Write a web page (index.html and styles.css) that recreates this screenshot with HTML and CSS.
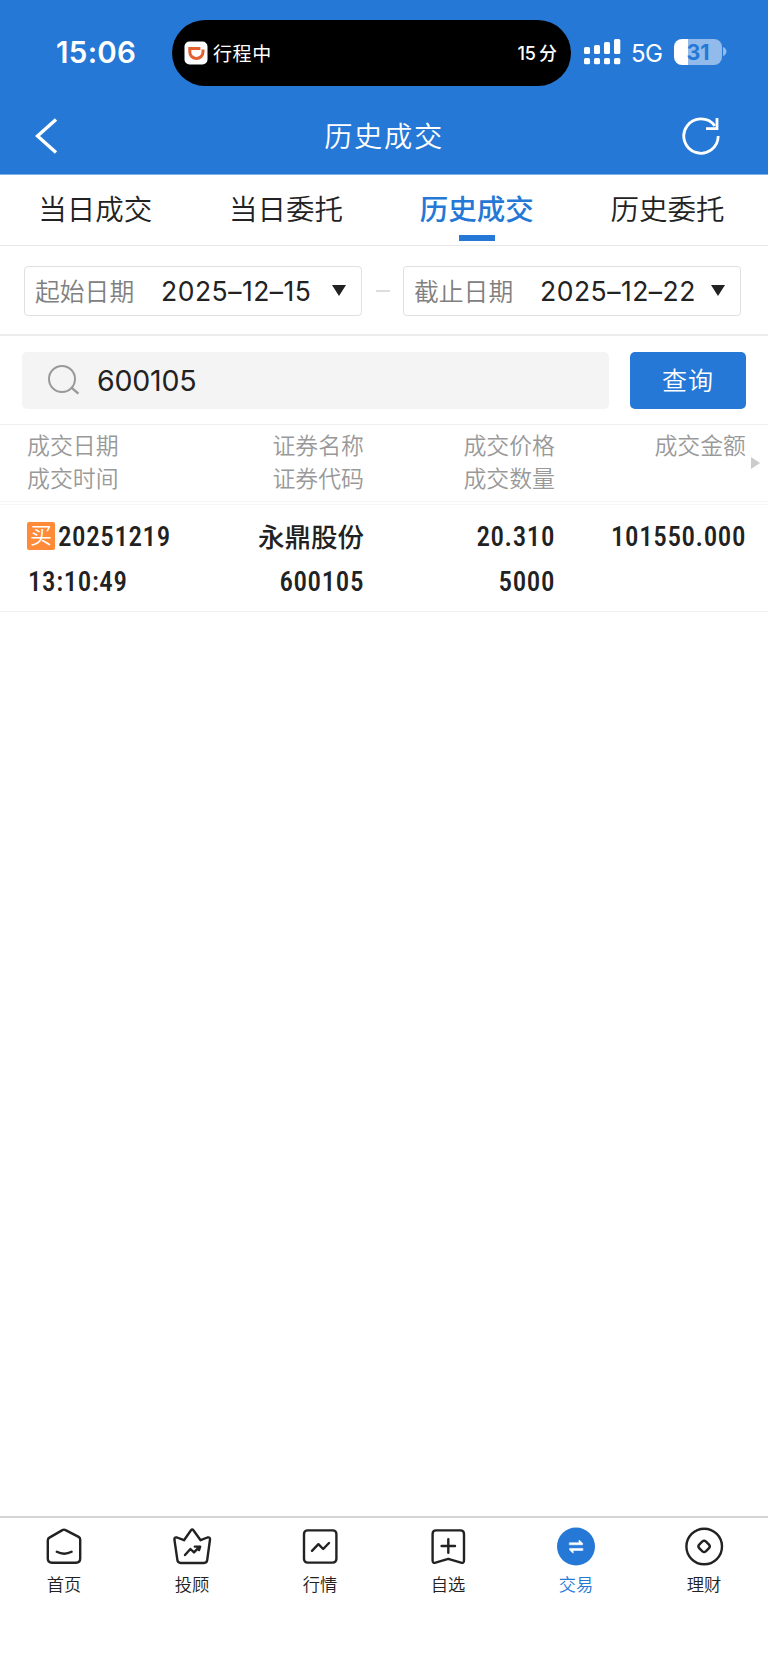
FILE: index.html
```html
<!DOCTYPE html>
<html lang="zh-CN">
<head>
  <meta charset="UTF-8">
  <meta name="viewport" content="width=device-width, initial-scale=1.0">
  <title>历史成交</title>
  <link rel="stylesheet" href="styles.css">
</head>
<body>
  <!-- Header -->
  <header class="header">
    <div class="status-bar">
      <span class="clock">15:06</span>
      <div class="island">
        <svg class="trip-icon" width="24" height="24" viewBox="0 0 24 24">
          <rect x="0.5" y="0.5" width="23" height="23" rx="5" fill="#fff"/>
          <path d="M16.4 7.4H5.8V11A6.5 6.5 0 0 0 19 11V8.4" fill="none" stroke="#e4602f" stroke-width="3"/>
        </svg>
        <span class="trip">行程中</span>
        <span class="eta">15<i>分</i></span>
      </div>
      <svg class="signal" width="37" height="26" viewBox="0 0 37 26" fill="#fff">
        <rect x="0" y="8" width="6" height="7" rx="1.6"/>
        <rect x="10" y="6" width="6" height="9" rx="1.6"/>
        <rect x="20" y="3" width="6" height="12" rx="1.6"/>
        <rect x="30" y="0" width="6.3" height="15" rx="1.6"/>
        <rect x="0" y="19" width="6" height="6.3" rx="1.6"/>
        <rect x="10" y="19" width="6" height="6.3" rx="1.6"/>
        <rect x="20" y="19" width="6" height="6.3" rx="1.6"/>
        <rect x="30" y="19" width="6.3" height="6.3" rx="1.6"/>
      </svg>
      <span class="network">5G</span>
      <div class="battery"><span>31</span></div>
      <svg class="battery-cap" width="4" height="9" viewBox="0 0 4 9">
        <path d="M0 0C4.6 1.6 4.6 7.4 0 9Z" fill="#92bbeb"/>
      </svg>
    </div>
    <div class="title-bar">
      <svg class="back" width="24" height="36" viewBox="0 0 24 36">
        <path d="M21 1.5L2.5 18L21 34.5" fill="none" stroke="#fff" stroke-width="3.4"/>
      </svg>
      <h1>历史成交</h1>
      <svg class="refresh" width="40" height="40" viewBox="0 0 40 40" fill="none" stroke="#fff" stroke-width="2.8">
        <path d="M37.2 20A17.2 17.2 0 1 1 33.8 9.8"/>
        <path d="M36 2V12.7H25"/>
      </svg>
    </div>
  </header>

  <!-- Tabs -->
  <nav class="tabs">
    <a>当日成交</a>
    <a>当日委托</a>
    <a class="active">历史成交</a>
    <a>历史委托</a>
  </nav>

  <!-- Date range -->
  <section class="dates">
    <div class="date-box">
      <label>起始日期</label>
      <span class="date">2025–12–15</span>
      <span class="caret"></span>
    </div>
    <span class="dash"></span>
    <div class="date-box">
      <label>截止日期</label>
      <span class="date">2025–12–22</span>
      <span class="caret"></span>
    </div>
  </section>

  <!-- Search -->
  <section class="search">
    <div class="search-box">
      <svg width="32" height="30" viewBox="0 0 32 30" fill="none" stroke="#999" stroke-width="2">
        <circle cx="14" cy="14" r="13"/>
        <path d="M23.2 22.4L30.4 28.6" stroke-width="2.4"/>
      </svg>
      <span>600105</span>
    </div>
    <button class="btn">查询</button>
  </section>

  <!-- Deals -->
  <section class="table-head">
    <div>成交日期<br>成交时间</div>
    <div>证券名称<br>证券代码</div>
    <div>成交价格<br>成交数量</div>
    <div>成交金额</div>
    <span class="more"></span>
  </section>
  <section class="table-row">
    <div><p><b class="buy">买</b>20251219</p><p>13:10:49</p></div>
    <div><p class="name">永鼎股份</p><p>600105</p></div>
    <div><p>20.310</p><p>5000</p></div>
    <div><p>101550.000</p></div>
  </section>

  <!-- Bottom nav -->
  <nav class="bottom-nav">
    <a>
      <svg width="40" height="40" viewBox="0 0 40 40">
        <path d="M5.4 11.6L18.4 4.1Q20 3.2 21.6 4.1L34.6 10.9Q36.2 11.8 36.2 13.6V32.6Q36.2 36.8 32 36.8H8Q3.8 36.8 3.8 32.6V14.2Q3.8 12.5 5.4 11.6Z"/>
        <path d="M12.8 25.8Q20.2 29.6 27.6 25.8"/>
      </svg>
      首页
    </a>
    <a>
      <svg width="40" height="40" viewBox="0 0 40 40">
        <path d="M19 4.2Q20.2 2.8 21.4 4.2L28.6 14.2L35.4 11.5Q38.2 10.8 38 13.5L35.2 34.2Q34.8 37 32 37H8.6Q5.8 37 5.4 34.2L2.4 13.5Q2.2 10.8 5 11.5L12 14.2Z"/>
        <path d="M13 29L18.4 23L22 26.4L27.6 20.6M22.8 20.6H28.2L27 24"/>
      </svg>
      投顾
    </a>
    <a>
      <svg width="40" height="40" viewBox="0 0 40 40">
        <rect x="4" y="4.4" width="32.4" height="32.2" rx="3.6"/>
        <path d="M12 24.8L18.4 18.2L23.2 23L29 17"/>
      </svg>
      行情
    </a>
    <a>
      <svg width="40" height="40" viewBox="0 0 40 40">
        <path d="M8 4.4H32.4Q36 4.4 36 8V34.6Q36 37.6 33 36.7L20.2 32.8L7.6 36.7Q4.6 37.6 4.6 34.6V8Q4.6 4.4 8 4.4Z"/>
        <path d="M13.6 20H27M20.3 13.3V26.7"/>
      </svg>
      自选
    </a>
    <a class="active">
      <svg width="40" height="40" viewBox="0 0 40 40">
        <circle class="disc" cx="20" cy="20.5" r="19"/>
        <path class="arrows" d="M13.6 16.8H23V14.1L26.6 17.2V18.8H13.6ZM26.6 22.4H13.6V24L17.2 27.2V24.4H26.6Z"/>
      </svg>
      交易
    </a>
    <a>
      <svg width="40" height="40" viewBox="0 0 40 40">
        <circle cx="20.2" cy="20.5" r="17.8"/>
        <path d="M18.4 15.4Q20.1 14 21.8 15.4L25 18.6Q26.6 20.4 25 22.2L21.8 25.4Q20.1 26.8 18.4 25.4L15.2 22.2Q13.6 20.4 15.2 18.6Z"/>
      </svg>
      理财
    </a>
  </nav>
</body>
</html>
```

FILE: styles.css
```css
* {
  margin: 0;
  padding: 0;
  box-sizing: border-box;
}

body {
  display: flex;
  flex-direction: column;
  height: 1665px;
  background-color: #fff;
  color: #222;
  font-family: Inter, "Noto Sans CJK SC", sans-serif;
  font-weight: 350;
}

svg {
  display: block;
  flex-shrink: 0;
}

/* Header */
.header {
  height: 175px;
  background-color: #2578d6;
  border-bottom: 1px solid #7fb0e7;
  color: #fff;
}
.status-bar {
  display: flex;
  align-items: center;
  padding: 20px 0 0 56px;
}
.clock {
  width: 116px;
  margin-top: -2px;
  font-size: 29.5px;
  font-weight: 600;
  letter-spacing: 0.3px;
}
.island {
  display: flex;
  align-items: center;
  width: 399px;
  height: 66px;
  padding: 0 14px 0 12px;
  border-radius: 33px;
  background-color: #000;
}
.trip {
  margin: -2px 0 0 5px;
  font-size: 19px;
  font-weight: 400;
  letter-spacing: 0.6px;
}
.eta {
  margin: -2px 0 0 auto;
  font-size: 18px;
  font-weight: 500;
}
.eta i {
  margin-left: 3px;
  font-style: normal;
}
.signal {
  margin: -3px 0 0 13px;
}
.network {
  width: 43px;
  margin-left: 10px;
  font-size: 24px;
  font-weight: 400;
  letter-spacing: -0.5px;
}
.battery {
  width: 48px;
  height: 26px;
  margin-top: -3px;
  border-radius: 8px;
  background: linear-gradient(to right, #fff 14px, #92bbeb 14px);
  color: #2578d6;
  font-size: 21.5px;
  font-weight: 700;
  line-height: 26px;
  text-align: center;
}
.battery-cap {
  margin: -3px 0 0 1px;
}
.title-bar {
  display: grid;
  grid-template-columns: 100px 1fr 100px;
  align-items: center;
  height: 88px;
  padding: 11px 0 0;
}
.back {
  margin-left: 35px;
}
.refresh {
  margin-left: 13px;
}
.title-bar h1 {
  margin-top: -2px;
  font-size: 28.3px;
  font-weight: 350;
  letter-spacing: 1.6px;
  text-align: center;
}

/* Tabs */
.tabs {
  display: grid;
  grid-template-columns: repeat(4, 1fr);
  height: 71px;
  padding-right: 5px;
  border-bottom: 1px solid #e8e8e8;
}
.tabs a {
  display: flex;
  flex-direction: column;
  align-items: center;
  padding-top: 14px;
  font-size: 28.5px;
  line-height: 41px;
}
.tabs .active {
  color: #2578d6;
  font-weight: 500;
}
.tabs .active::after {
  content: '';
  width: 36px;
  height: 6px;
  margin-top: 5px;
  background-color: #2578d6;
}

/* Date range */
.dates {
  display: flex;
  align-items: center;
  height: 90px;
  padding: 1px 27px 0 24px;
  border-bottom: 2px solid #ececec;
}
.date-box {
  display: flex;
  align-items: center;
  width: 338px;
  height: 50px;
  padding: 0 15px 0 10px;
  border: 1px solid #e0e0e0;
  border-radius: 4px;
}
.date-box label {
  width: 126px;
  margin-top: -1px;
  color: #808080;
  font-size: 24.8px;
}
.date {
  padding-top: 1px;
  font-size: 26.5px;
  font-weight: 400;
  letter-spacing: 0.5px;
  white-space: nowrap;
}
.caret {
  margin-left: auto;
  border: 7px solid transparent;
  border-top: 11px solid #222;
  border-bottom: 0;
}
.dash {
  width: 14px;
  height: 2px;
  margin: 0 auto;
  background-color: #ddd;
}

/* Search */
.search {
  display: flex;
  justify-content: space-between;
  height: 89px;
  padding: 16px 22px 0;
  border-bottom: 1px solid #f0f0f0;
}
.search-box {
  display: flex;
  align-items: center;
  width: 587px;
  height: 57px;
  padding-left: 26px;
  border-radius: 5px;
  background-color: #f4f4f4;
}
.search-box svg {
  margin-top: -1px;
}
.search-box span {
  margin-left: 17px;
  font-size: 28.5px;
  font-weight: 400;
  letter-spacing: -0.2px;
}
.btn {
  width: 116px;
  height: 57px;
  padding-bottom: 3px;
  border: 0;
  border-radius: 5px;
  background-color: #2578d6;
  color: #fff;
  font-family: inherit;
  font-size: 25px;
  font-weight: 350;
  letter-spacing: 1px;
}

/* Deals */
.table-head,
.table-row {
  display: grid;
  grid-template-columns: 164px 172px 191px 191px;
  padding-left: 28px;
}
.table-head > div + div,
.table-row > div + div {
  text-align: right;
}
.table-head {
  position: relative;
  height: 77px;
  padding-top: 5px;
  border-bottom: 1px solid #f4f4f4;
  color: #999;
  font-size: 22.9px;
  line-height: 33px;
}
.table-head > div:first-child {
  margin-left: -1px;
}
.more {
  position: absolute;
  top: 32px;
  right: 8px;
  border: 6px solid transparent;
  border-left: 9px solid #ccc;
  border-right: 0;
}
.table-row {
  height: 108px;
  margin-top: 2px;
  padding-top: 10px;
  border-top: 1px solid #f6f6f6;
  border-bottom: 1px solid #f0f0f0;
  font-family: "Roboto Condensed", Roboto, "Noto Sans CJK SC", sans-serif;
  font-size: 27px;
  font-stretch: 85%;
  font-weight: 500;
  line-height: 45px;
  letter-spacing: 0.6px;
}
.table-row p {
  display: flex;
  align-items: center;
  height: 45px;
  white-space: nowrap;
}
.table-row > div + div p {
  justify-content: flex-end;
}
.table-row .name {
  font-size: 26.5px;
  letter-spacing: 0;
}
.buy {
  width: 28px;
  height: 28px;
  margin: -3px 3px 0 -1px;
  border-radius: 2px;
  background-color: #ff8a38;
  color: #fff;
  font-size: 22px;
  font-weight: 350;
  line-height: 28px;
  letter-spacing: 0;
  text-align: center;
}

/* Bottom nav */
.bottom-nav {
  display: grid;
  grid-template-columns: repeat(6, 1fr);
  height: 149px;
  margin-top: auto;
  padding-top: 8px;
  border-top: 2px solid #d4d6d6;
}
.bottom-nav a {
  display: flex;
  flex-direction: column;
  align-items: center;
  font-size: 17.3px;
  line-height: 26px;
}
.bottom-nav svg {
  margin-bottom: 6px;
  fill: none;
  stroke: #222;
  stroke-width: 2.4;
  stroke-linecap: round;
  stroke-linejoin: round;
}
.bottom-nav .active {
  color: #2578d6;
}
.bottom-nav .disc {
  fill: #2578d6;
  stroke: none;
}
.bottom-nav .arrows {
  fill: #fff;
  stroke: #fff;
  stroke-width: 0.6;
}
```
